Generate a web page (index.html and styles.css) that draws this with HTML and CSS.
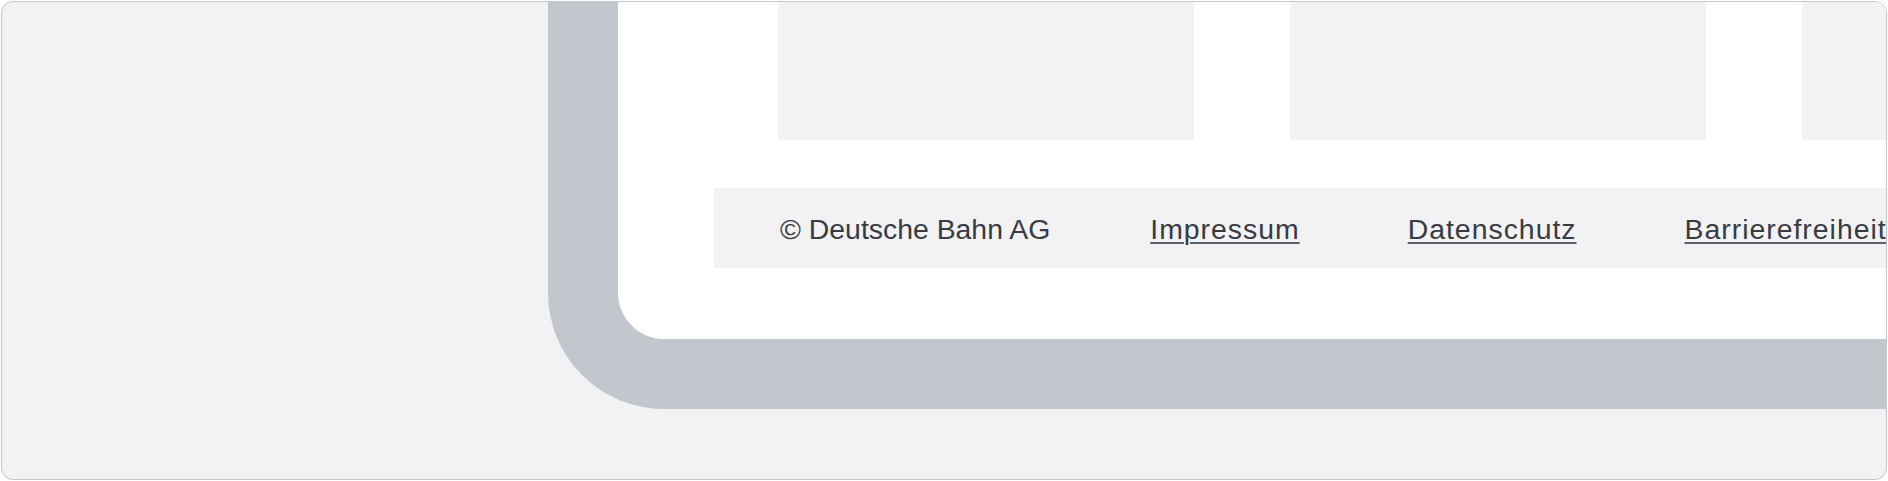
FILE: index.html
```html
<!DOCTYPE html>
<html lang="de">
<head>
  <meta charset="UTF-8">
  <meta name="viewport" content="width=device-width, initial-scale=1.0">
  <title>Footer Preview</title>
  <link rel="stylesheet" href="styles.css">
</head>
<body>

  <div class="preview">
    <div class="device">
      <div class="screen">
        <div class="teasers">
          <div class="teaser"></div>
          <div class="teaser"></div>
          <div class="teaser"></div>
        </div>

        <footer class="footer">
          <span class="copyright">© Deutsche Bahn AG</span>
          <a href="#">Impressum</a>
          <a href="#">Datenschutz</a>
          <a href="#">Barrierefreiheit</a>
        </footer>
      </div>
    </div>
  </div>

</body>
</html>
```

FILE: styles.css
```css
html, body {
  height: 100%;
}
body {
  margin: 0;
  font-family: "Liberation Sans", Arial, sans-serif;
  background-color: #ffffff;
}
.preview {
  box-sizing: border-box;
  height: calc(100% - 2px);
  margin: 1px;
  border: 1px solid #c4c7cd;
  border-radius: 12px;
  background-color: #f2f2f4;
  overflow: hidden;
  display: flex;
  align-items: flex-start;
}
.device {
  flex: none;
  width: 1500px;
  margin-left: 546px;
  border-left: 70px solid #c2c6cd;
  border-bottom: 70px solid #c2c6cd;
  border-bottom-left-radius: 116px;
  background-color: #ffffff;
}
.screen {
  height: 337px;
  padding-left: 96px;
}
.teasers {
  display: flex;
  gap: 96px;
  padding-left: 64px;
  margin-bottom: 48px;
}
.teaser {
  flex: none;
  width: 416px;
  height: 138px;
  background-color: #f2f2f4;
  border-radius: 0 0 4px 4px;
}
.footer {
  display: flex;
  align-items: center;
  height: 80px;
  padding-left: 66px;
  padding-top: 2px;
  box-sizing: border-box;
  background-color: #f2f2f4;
  font-size: 28.4px;
  color: #383b42;
  white-space: nowrap;
}
.copyright {
  margin-right: 100px;
}
.footer a {
  color: #383b42;
  letter-spacing: 1px;
  margin-right: 108px;
  text-decoration: underline;
  text-decoration-thickness: 2px;
  text-underline-offset: 3px;
  text-decoration-color: #5c6068;
}
```
